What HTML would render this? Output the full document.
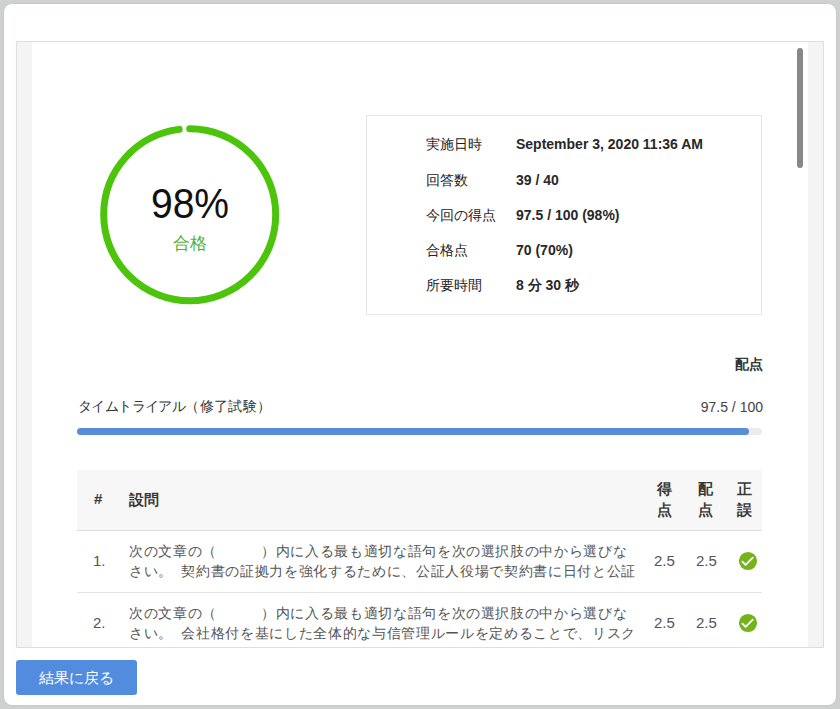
<!DOCTYPE html>
<html lang="ja">
<head>
<meta charset="utf-8">
<style>
*{margin:0;padding:0;box-sizing:border-box;}
html,body{width:840px;height:709px;overflow:hidden;background:#cfd0d0;font-family:"Liberation Sans",sans-serif;color:#333;}
.abs{position:absolute;}
#card{position:absolute;left:4px;top:4px;width:832px;height:701px;background:#fff;border-radius:8px;box-shadow:0 0 0 1px #c7c8c8;}
#frame{position:absolute;left:16px;top:41px;width:808px;height:607px;border:1px solid #dedede;background:#fff;overflow:hidden;}
#stripL{position:absolute;left:0;top:0;width:15px;height:605px;background:#f4f4f4;}
#stripR{position:absolute;left:791px;top:0;width:15px;height:605px;background:#f4f4f4;}
#thumb{position:absolute;left:797px;top:48px;width:6px;height:120px;background:#888;border-radius:3px;}
.t{position:absolute;white-space:nowrap;line-height:1;}
#info{position:absolute;left:366px;top:115px;width:396px;height:200px;border:1px solid #e6e6e6;}
.lab{position:absolute;left:426px;font-size:14px;color:#222;white-space:nowrap;line-height:20px;}
.val{position:absolute;left:516px;font-size:14px;font-weight:bold;color:#282828;white-space:nowrap;line-height:20px;}
#bar{position:absolute;left:77px;top:428px;width:685px;height:7px;border-radius:4px;background:#ececec;}
#fill{position:absolute;left:0;top:0;width:672px;height:7px;border-radius:4px;background:#5a8dd9;}
#thead{position:absolute;left:77px;top:470px;width:685px;height:61px;background:#f7f7f7;border-bottom:1px solid #dedede;}
.sep{position:absolute;left:77px;width:685px;height:1px;background:#e3e3e3;}
.hd{position:absolute;font-size:15px;font-weight:bold;color:#3a3a3a;line-height:20.5px;white-space:nowrap;}
.q{position:absolute;left:129px;font-size:14px;letter-spacing:0.66px;color:#555;line-height:20px;white-space:nowrap;}
.sp{display:inline-block;width:8.5px;}
.num{position:absolute;font-size:15px;color:#555;white-space:nowrap;line-height:20px;}
#btn{position:absolute;left:16px;top:660px;width:121px;height:35px;background:#528cdf;border-radius:3px;color:#fff;font-size:14.6px;text-align:center;line-height:37px;}
</style>
</head>
<body>
<div id="card"></div>
<div id="frame">
  <div id="stripL"></div>
  <div id="stripR"></div>
</div>
<div id="thumb"></div>

<svg class="abs" style="left:0;top:0" width="840" height="709">
  <circle cx="189.7" cy="214.7" r="86" fill="none" stroke="#4cc40b" stroke-width="7" stroke-linecap="round"
   stroke-dasharray="528.8 600" transform="rotate(-90 189.7 214.7)"/>
</svg>
<div class="t" style="left:130px;width:120px;text-align:center;top:183px;font-size:42px;color:#111;transform:scaleX(0.93);">98%</div>
<div class="t" style="left:130px;width:120px;text-align:center;top:234.5px;font-size:17px;color:#52b02e;">合格</div>

<div id="info"></div>
<div class="lab" style="top:134px">実施日時</div>
<div class="val" style="top:134px">September 3, 2020 11:36 AM</div>
<div class="lab" style="top:170px">回答数</div>
<div class="val" style="top:170px">39 / 40</div>
<div class="lab" style="top:205px">今回の得点</div>
<div class="val" style="top:205px">97.5 / 100 (98%)</div>
<div class="lab" style="top:240px">合格点</div>
<div class="val" style="top:240px">70 (70%)</div>
<div class="lab" style="top:275px">所要時間</div>
<div class="val" style="top:275px">8 分 30 秒</div>

<div class="t" style="right:77px;top:357px;font-size:14px;font-weight:bold;color:#333;">配点</div>
<div class="t" style="left:78px;top:399px;font-size:14px;color:#333;"><span style="letter-spacing:-0.6px">タイムトライアル</span><span style="letter-spacing:0.4px">（修了試験）</span></div>
<div class="t" style="right:77px;top:400px;font-size:14px;color:#444;">97.5 / 100</div>
<div id="bar"><div id="fill"></div></div>

<div id="thead"></div>
<div class="hd" style="left:94px;top:489px">#</div>
<div class="hd" style="left:129px;top:490px">設問</div>
<div class="hd" style="left:657px;top:479px;width:15px;white-space:normal">得点</div>
<div class="hd" style="left:698px;top:479px;width:15px;white-space:normal">配点</div>
<div class="hd" style="left:737px;top:479px;width:15px;white-space:normal">正誤</div>

<div class="num" style="left:93px;top:551px">1.</div>
<div class="q" style="top:541px">次の文章の（　　　）内に入る最も適切な語句を次の選択肢の中から選びな</div>
<div class="q" style="top:561px">さい。<span class="sp"></span>契約書の証拠力を強化するために、公証人役場で契約書に日付と公証</div>
<div class="num" style="left:654px;top:551px">2.5</div>
<div class="num" style="left:696px;top:551px">2.5</div>
<svg class="abs" style="left:738px;top:551px" width="20" height="20" viewBox="0 0 20 20">
  <circle cx="10" cy="10" r="9.1" fill="#74b31b"/>
  <path d="M4.4 10.6 L7.6 13.8 L14.8 6.6" fill="none" stroke="#fff" stroke-width="1.8" stroke-linecap="round" stroke-linejoin="round"/>
</svg>
<div class="sep" style="top:592px"></div>

<div class="num" style="left:93px;top:613px">2.</div>
<div class="q" style="top:603px">次の文章の（　　　）内に入る最も適切な語句を次の選択肢の中から選びな</div>
<div class="q" style="top:623px">さい。<span class="sp"></span>会社格付を基にした全体的な与信管理ルールを定めることで、リスク</div>
<div class="num" style="left:654px;top:613px">2.5</div>
<div class="num" style="left:696px;top:613px">2.5</div>
<svg class="abs" style="left:738px;top:613px" width="20" height="20" viewBox="0 0 20 20">
  <circle cx="10" cy="10" r="9.1" fill="#74b31b"/>
  <path d="M4.4 10.6 L7.6 13.8 L14.8 6.6" fill="none" stroke="#fff" stroke-width="1.8" stroke-linecap="round" stroke-linejoin="round"/>
</svg>

<div id="btn">結果に戻る</div>
</body>
</html>
